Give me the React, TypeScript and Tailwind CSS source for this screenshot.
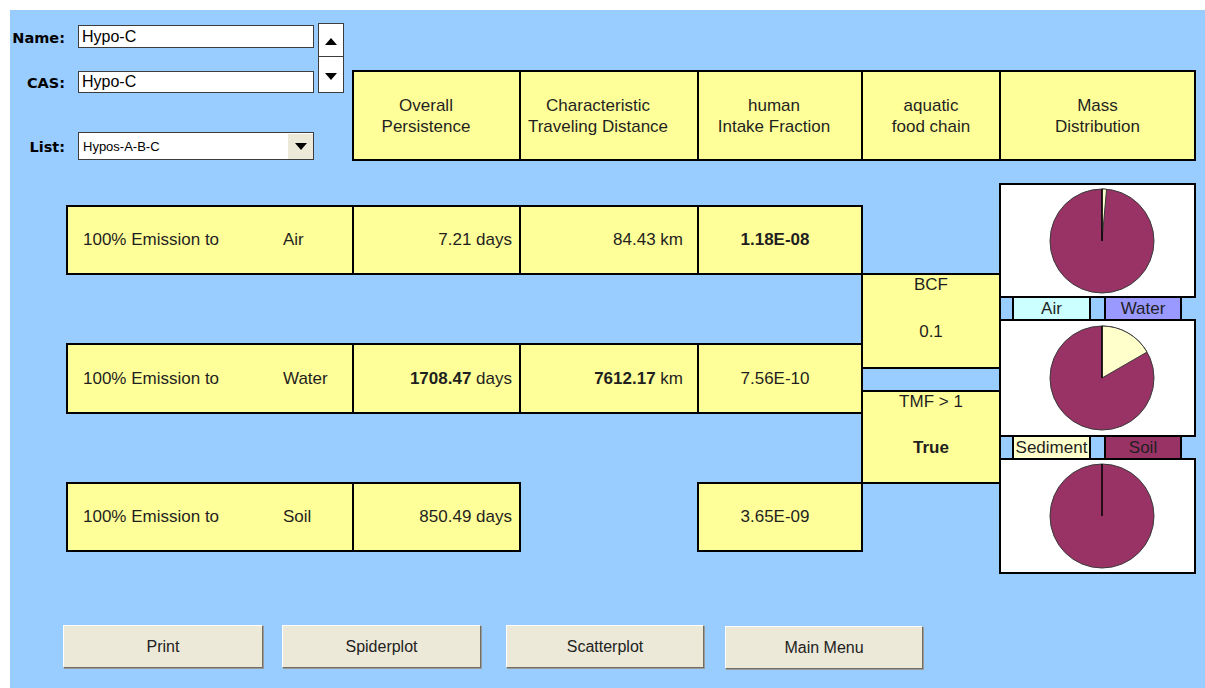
import React from 'react';

interface Measure {
  value: string;
  bold?: boolean;
}

interface EmissionRow {
  medium: string;
  rows: string;
  persistence: Measure;
  distance?: Measure;
  intake: Measure;
}

const SOIL = '#993366';
const SEDIMENT = '#ffffcc';

// column headers sit on grid row 2, one per result column
const headers = [
  { cols: 'col-start-3 col-end-4 pr-[21px]', lines: ['Overall', 'Persistence'] },
  { cols: 'col-start-4 col-end-5 pr-[22px]', lines: ['Characteristic', 'Traveling Distance'] },
  { cols: 'col-start-5 col-end-6 pr-[12px]', lines: ['human', 'Intake Fraction'] },
  { cols: 'col-start-6 col-end-7', lines: ['aquatic', 'food chain'] },
  { cols: 'col-start-7 col-end-8', lines: ['Mass', 'Distribution'] },
];

const emissionRows: EmissionRow[] = [
  {
    medium: 'Air',
    rows: 'row-start-5 row-end-6',
    persistence: { value: '7.21' },
    distance: { value: '84.43' },
    intake: { value: '1.18E-08', bold: true },
  },
  {
    medium: 'Water',
    rows: 'row-start-9 row-end-12',
    persistence: { value: '1708.47', bold: true },
    distance: { value: '7612.17', bold: true },
    intake: { value: '7.56E-10' },
  },
  {
    medium: 'Soil',
    rows: 'row-start-15 row-end-16',
    persistence: { value: '850.49' },
    intake: { value: '3.65E-09' },
  },
];

// yellow result cell; the -1px margin makes neighbouring borders overlap into one line
const Cell: React.FC<{ className: string; children?: React.ReactNode }> = ({ className, children }) => (
  <div className={`-m-px border-2 border-black bg-[#ffff99] ${className}`}>{children}</div>
);

const point = (deg: number, r = 52) => {
  const rad = (deg * Math.PI) / 180;
  return [55 + r * Math.sin(rad), 55 - r * Math.cos(rad)];
};

const wedge = (a0: number, a1: number) => {
  const [x0, y0] = point(a0);
  const [x1, y1] = point(a1);
  const large = a1 - a0 > 180 ? 1 : 0;
  return `M55 55 L${x0} ${y0} A52 52 0 ${large} 1 ${x1} ${y1} Z`;
};

const Pie: React.FC<{ rows: string; sediment: number }> = ({ rows, sediment }) => (
  <div className={`-m-px flex items-center justify-center border-2 border-black bg-white pl-[9px] col-start-7 col-end-8 ${rows}`}>
    <svg width="110" height="110" viewBox="0 0 110 110">
      <circle cx="55" cy="55" r="52" fill={SOIL} stroke="#3a3a3a" strokeWidth="1" />
      {sediment > 0 && <path d={wedge(0, sediment)} fill={SEDIMENT} stroke="#3a3a3a" strokeWidth="1" />}
      <line x1="55" y1="55" x2="55" y2="3" stroke="#000" strokeWidth="1.5" />
    </svg>
  </div>
);

const LegendKey: React.FC<{ label: string; className: string }> = ({ label, className }) => (
  <div className={`-my-px flex items-center justify-center border-2 border-black text-[17px] leading-none ${className}`}>
    {label}
  </div>
);

const Legend: React.FC<{ rows: string; left: [string, string]; right: [string, string] }> = ({ rows, left, right }) => (
  <div className={`-ml-px flex border-l-2 border-black col-start-7 col-end-8 ${rows}`}>
    <LegendKey label={left[0]} className={`ml-[11px] w-[79px] ${left[1]}`} />
    <LegendKey label={right[0]} className={`ml-[13px] w-[78px] ${right[1]}`} />
  </div>
);

const Label: React.FC<{ children: React.ReactNode }> = ({ children }) => (
  <span className="mr-[12px] mt-[3px] w-[56px] pr-[1px] text-right font-['DejaVu_Sans',Verdana,sans-serif] text-[14.5px] font-bold leading-none text-black">
    {children}
  </span>
);

const TextField: React.FC<{ value: string; height: string }> = ({ value, height }) => (
  <div className={`flex w-[236px] items-center border border-[#3c3c3c] bg-white pl-[3px] text-[16px] leading-none text-black ${height}`}>
    {value}
  </div>
);

const Arrow: React.FC<{ down?: boolean }> = ({ down }) => (
  <svg width="12" height="7" viewBox="0 0 12 7">
    <polygon points={down ? '0,0 12,0 6,7' : '0,7 12,7 6,0'} fill="#000" />
  </svg>
);

const Button: React.FC<{ label: string; className: string }> = ({ label, className }) => (
  <button
    className={`flex h-[43px] items-center justify-center border border-white border-r-[#716f64] border-b-[#716f64] bg-[#ece9d8] text-[16px] text-[#222] shadow-[1px_1px_0_#9a9a9a] ${className}`}
  >
    {label}
  </button>
);

export default function App() {
  return (
    <div className="h-[688px] w-[1205px] overflow-hidden bg-white pl-[10px] pt-[10px] font-['Liberation_Sans',Arial,sans-serif] text-[#1f1f1f]">
      <div className="flex h-[678px] w-[1195px] flex-col bg-[#99ccff]">
        <div className="grid grid-cols-[57px_286px_167px_178px_164px_138px_195px_1fr] grid-rows-[61px_89px_24px_22px_68px_23px_23px_24px_24px_23px_22px_23px_23px_24px_68px_22px]">
          {/* substance selector */}
          <div className="col-start-1 col-end-3 row-start-1 row-end-3 flex flex-col">
            <div className="mt-[13px] flex items-start">
              <div className="flex flex-col">
                <div className="mt-[2px] flex items-center">
                  <Label>Name:</Label>
                  <TextField value="Hypo-C" height="h-[23px]" />
                </div>
                <div className="mt-[23px] flex items-center">
                  <Label>CAS:</Label>
                  <TextField value="Hypo-C" height="h-[22px]" />
                </div>
              </div>
              <div className="ml-[4px] flex h-[70px] w-[26px] flex-col border border-[#3c3c3c] bg-white">
                <div className="flex h-[33px] items-center justify-center border-b border-[#3c3c3c] pt-[3px]">
                  <Arrow />
                </div>
                <div className="flex flex-1 items-center justify-center pt-[3px]">
                  <Arrow down />
                </div>
              </div>
            </div>
            <div className="mt-[39px] flex items-center">
              <Label>List:</Label>
              <div className="flex h-[28px] w-[236px] items-stretch border border-[#3c3c3c] bg-white">
                <span className="flex flex-1 items-center pl-[4px] text-[13px] leading-none text-black">Hypos-A-B-C</span>
                <span className="flex w-[26px] items-center justify-center border-l border-t border-white bg-[#ece9d8]">
                  <Arrow down />
                </span>
              </div>
            </div>
          </div>

          {headers.map((h) => (
            <Cell key={h.lines[0]} className={`row-start-2 row-end-3 flex flex-col items-center justify-center pt-[1px] text-center text-[17px] leading-[21px] ${h.cols}`}>
              <span>{h.lines[0]}</span>
              <span>{h.lines[1]}</span>
            </Cell>
          ))}

          {emissionRows.map((r) => (
            <React.Fragment key={r.medium}>
              <Cell className={`col-start-2 col-end-3 flex items-center pl-[15px] text-[17px] ${r.rows}`}>
                <span className="w-[200px]">100% Emission to</span>
                <span>{r.medium}</span>
              </Cell>
              <Cell className={`col-start-3 col-end-4 flex items-center justify-end pr-[7px] text-[17px] ${r.rows}`}>
                <span className={r.persistence.bold ? 'font-bold' : ''}>{r.persistence.value}</span>
                <span>&nbsp;days</span>
              </Cell>
              {r.distance && (
                <Cell className={`col-start-4 col-end-5 flex items-center justify-end pr-[14px] text-[17px] ${r.rows}`}>
                  <span className={r.distance.bold ? 'font-bold' : ''}>{r.distance.value}</span>
                  <span>&nbsp;km</span>
                </Cell>
              )}
              <Cell className={`col-start-5 col-end-6 flex items-center justify-center pr-[10px] text-[17px] ${r.rows}`}>
                <span className={r.intake.bold ? 'font-bold' : ''}>{r.intake.value}</span>
              </Cell>
            </React.Fragment>
          ))}

          {/* aquatic food chain */}
          <Cell className="col-start-6 col-end-7 row-start-6 row-end-10 flex flex-col items-center text-[17px] leading-[20px]">
            <span>BCF</span>
            <span className="mt-[27px]">0.1</span>
          </Cell>
          <Cell className="col-start-6 col-end-7 row-start-11 row-end-15 flex flex-col items-center text-[17px] leading-[20px]">
            <span>TMF &gt; 1</span>
            <span className="mt-[26px] font-bold">True</span>
          </Cell>

          {/* mass distribution per emission compartment */}
          <Pie rows="row-start-4 row-end-7" sediment={5} />
          <Legend rows="row-start-7 row-end-8" left={['Air', 'bg-[#ccffff]']} right={['Water', 'bg-[#9999ff]']} />
          <Pie rows="row-start-8 row-end-13" sediment={60} />
          <Legend rows="row-start-13 row-end-14" left={['Sediment', 'bg-[#ffffcc]']} right={['Soil', 'bg-[#993366]']} />
          <Pie rows="row-start-14 row-end-17" sediment={0} />
        </div>

        <div className="mt-[52px] flex items-start pl-[53px]">
          <Button label="Print" className="w-[200px]" />
          <Button label="Spiderplot" className="ml-[19px] w-[199px]" />
          <Button label="Scatterplot" className="ml-[25px] w-[198px]" />
          <Button label="Main Menu" className="ml-[21px] mt-[1px] w-[198px]" />
        </div>
      </div>
    </div>
  );
}
